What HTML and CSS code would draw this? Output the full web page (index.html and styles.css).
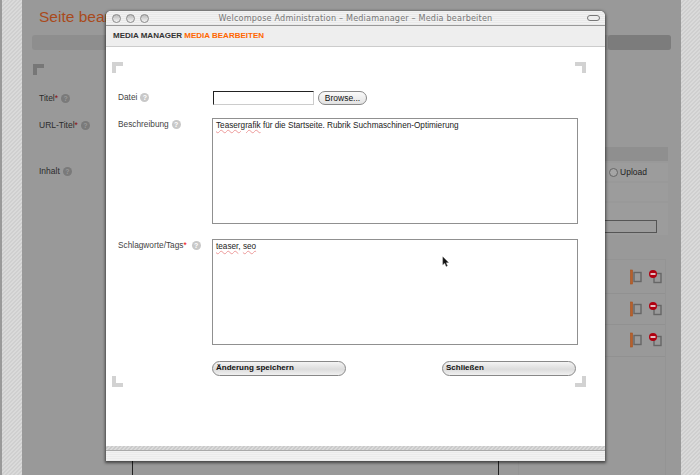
FILE: index.html
```html
<!DOCTYPE html>
<html lang="de">
<head>
<meta charset="utf-8">
<title>Welcompose Administration</title>
<link rel="stylesheet" href="styles.css">
</head>
<body>
<div class="desk">
  <div class="page">
    <h1 class="page-title">Seite bearbeiten</h1>
    <div class="page-bar"><span class="page-bar-end"></span></div>
    <div class="page-corner"></div>
    <div class="page-cols">
      <div class="page-form">
        <div class="page-label page-label-title">Titel<em>*</em><span class="help help-dark">?</span></div>
        <div class="page-label page-label-url">URL-Titel<em>*</em><span class="help help-dark">?</span></div>
        <div class="page-label page-label-body">Inhalt<span class="help help-dark">?</span></div>
        <div class="page-editor"></div>
      </div>
      <div class="page-side">
        <div class="side-band"></div>
        <div class="side-row side-row-radio"><span class="side-radio"></span>Upload</div>
        <div class="side-row"></div>
        <div class="side-row side-row-input"><span class="side-input"></span></div>
        <div class="side-list">
          <div class="side-item"><svg class="side-icons" width="32" height="16" viewBox="0 0 32 16"><rect x="0.5" y="1" width="2" height="14" fill="#b8602c" stroke="#a5531f" stroke-width=".6"/><rect x="4" y="3.5" width="7" height="9" fill="none" stroke="#666" stroke-width="1.4"/><rect x="24" y="4.5" width="7" height="9" fill="none" stroke="#666" stroke-width="1.4"/><circle cx="23" cy="5" r="4" fill="#b00010"/><rect x="20.5" y="4.2" width="5" height="1.6" fill="#eee"/></svg></div>
          <div class="side-item"><svg class="side-icons" width="32" height="16" viewBox="0 0 32 16"><rect x="0.5" y="1" width="2" height="14" fill="#b8602c" stroke="#a5531f" stroke-width=".6"/><rect x="4" y="3.5" width="7" height="9" fill="none" stroke="#666" stroke-width="1.4"/><rect x="24" y="4.5" width="7" height="9" fill="none" stroke="#666" stroke-width="1.4"/><circle cx="23" cy="5" r="4" fill="#b00010"/><rect x="20.5" y="4.2" width="5" height="1.6" fill="#eee"/></svg></div>
          <div class="side-item"><svg class="side-icons" width="32" height="16" viewBox="0 0 32 16"><rect x="0.5" y="1" width="2" height="14" fill="#b8602c" stroke="#a5531f" stroke-width=".6"/><rect x="4" y="3.5" width="7" height="9" fill="none" stroke="#666" stroke-width="1.4"/><rect x="24" y="4.5" width="7" height="9" fill="none" stroke="#666" stroke-width="1.4"/><circle cx="23" cy="5" r="4" fill="#b00010"/><rect x="20.5" y="4.2" width="5" height="1.6" fill="#eee"/></svg></div>
        </div>
      </div>
    </div>
  </div>
</div>

<div class="window">
  <div class="titlebar">
    <div class="traffic"><span class="dot"></span><span class="dot"></span><span class="dot"></span></div>
    <div class="title">Welcompose Administration – Mediamanager – Media bearbeiten</div>
    <span class="pill"></span>
  </div>
  <div class="subhead"><strong>MEDIA MANAGER</strong> <span class="accent">MEDIA BEARBEITEN</span></div>
  <div class="content">
    <span class="corner corner-tl"></span>
    <span class="corner corner-tr"></span>
    <span class="corner corner-bl"></span>
    <span class="corner corner-br"></span>
    <div class="row row-file">
      <div class="label">Datei<span class="help">?</span></div>
      <div class="file-box"></div>
      <div class="browse">Browse...</div>
    </div>
    <div class="row row-desc">
      <div class="label">Beschreibung<span class="help">?</span></div>
      <div class="area"><span class="typo">Teasergrafik</span> für die Startseite. Rubrik Suchmaschinen-Optimierung</div>
    </div>
    <div class="row row-tags">
      <div class="label">Schlagworte/Tags<em>*</em><span class="help help-wide">?</span></div>
      <div class="area"><span class="typo">teaser</span>, <span class="typo">seo</span></div>
    </div>
    <div class="actions">
      <div class="btn">Änderung speichern</div>
      <div class="btn">Schließen</div>
    </div>
  </div>
  <div class="hatch"></div>
  <div class="footer"></div>
</div>

<svg class="cursor" width="8" height="12" viewBox="0 0 10 14"><path d="M1 0.5 L1 10.5 L3.4 8.4 L5.2 12.6 L6.8 11.8 L5 7.8 L8.2 7.6 Z" fill="#111" stroke="#777" stroke-width=".5"/></svg>
</body>
</html>
```
FILE: styles.css
```css
* { box-sizing: border-box; }
html, body { margin: 0; height: 100%; overflow: hidden; }
body {
  background: #999;
  font-family: "Liberation Sans", Arial, sans-serif;
  position: relative;
}
.desk {
  margin-left: 2px;
  height: 475px;
  padding-left: 20px;
  background: repeating-linear-gradient(135deg, #dadada 0, #dadada 1.414px, #cfcfcf 1.414px, #cfcfcf 2.828px);
}
.page {
  width: 659px;
  height: 475px;
  background: #999;
  overflow: hidden;
  padding-top: 8px;
}
.page-title {
  margin: 0 0 0 17px;
  font-size: 15.5px;
  line-height: 18px;
  font-weight: normal;
  color: #a94a1c;
}
.page-bar {
  margin: 9px 10px 0;
  height: 15px;
  background: #8e8e8e;
  border-radius: 3px;
  display: flex;
  justify-content: flex-end;
}
.page-bar-end {
  width: 63px;
  background: #7c7c7c;
  border-radius: 3px;
}
.page-corner {
  margin: 14px 0 0 11px;
  width: 11px;
  height: 11px;
  border-top: 4px solid #777;
  border-left: 4px solid #777;
}
.page-cols {
  display: grid;
  grid-template-columns: 496px 150px;
}
.page-form { padding-top: 18px; }
.page-label {
  margin-left: 17px;
  font-size: 8.5px;
  line-height: 11px;
  color: #2c2c2c;
  display: flex;
  align-items: center;
}
.page-label em { color: #8c1010; font-style: normal; }
.page-label-url { margin-top: 16px; }
.page-label-body { margin-top: 35px; }
.page-editor {
  margin: 14px 0 0 110px;
  width: 367px;
  height: 320px;
  border: 1px solid #222;
}
.help {
  display: inline-block;
  width: 9px;
  height: 9px;
  margin-left: 3px;
  border-radius: 50%;
  background: #c8c8c8;
  color: #fff;
  font-size: 7px;
  line-height: 9px;
  font-weight: bold;
  text-align: center;
}
.help-dark { background: #7a7a7a; color: #999; }
.page-side { padding-top: 72px; }
.side-band { height: 14px; background: #8f8f8f; }
.side-row {
  margin-top: 2px;
  height: 18px;
  background: #9c9c9c;
  display: flex;
  align-items: center;
  justify-content: flex-end;
  padding-right: 21px;
  font-size: 8.5px;
  color: #222;
}
.side-radio {
  width: 9px;
  height: 9px;
  margin-right: 2px;
  border-radius: 50%;
  border: 1px solid #666;
  background: #a5a5a5;
}
.side-row-input {
  height: 32px;
  align-items: flex-end;
  padding: 0 11px 2px 0;
}
.side-input {
  width: 140px;
  height: 13px;
  border: 1px solid #555;
}
.side-list {
  margin-top: 24px;
  width: 148px;
  height: 240px;
  border: 1px solid #949494;
  padding-top: 2px;
}
.side-item {
  height: 31.5px;
  border-bottom: 1px solid #919191;
  display: flex;
  align-items: center;
  justify-content: flex-end;
  padding: 0 3px 0 0;
}
.side-icons { display: block; }

.window {
  position: absolute;
  left: 106px;
  top: 11px;
  width: 499px;
  height: 450px;
  background: #fff;
  border-radius: 5px 5px 0 0;
  box-shadow: 0 1px 3px 1px rgba(0,0,0,.55);
  display: flex;
  flex-direction: column;
  overflow: hidden;
}
.titlebar {
  height: 15px;
  flex: none;
  display: flex;
  align-items: center;
  padding: 0 5px 0 6px;
  background: repeating-linear-gradient(180deg, #f2f2f2 0, #f2f2f2 1px, #e9e9e9 1px, #e9e9e9 2px);
  border-bottom: 1px solid #999;
}
.traffic { display: flex; gap: 5px; flex: none; }
.dot {
  width: 9px;
  height: 9px;
  border-radius: 50%;
  border: 1px solid #8a8a8a;
  background: linear-gradient(#bbb, #f4f4f4);
}
.title {
  flex: 1;
  text-align: center;
  font-family: "DejaVu Sans", sans-serif;
  font-size: 8.1px;
  letter-spacing: .18px;
  color: #777;
  white-space: nowrap;
  padding-right: 25px;
}
.pill {
  flex: none;
  width: 13px;
  height: 6px;
  border-radius: 3px;
  border: 1px solid #777;
  background: #eee;
}
.subhead {
  height: 21px;
  flex: none;
  padding: 0 0 0 7px;
  background: #eee;
  border-bottom: 1px solid #ccc;
  font-size: 8px;
  line-height: 20px;
  font-weight: bold;
  color: #333;
  white-space: pre;
}
.subhead strong { font-weight: bold; }
.accent { color: #f60; }
.content {
  flex: 1;
  position: relative;
  padding: 44px 0 0 12px;
}
.corner {
  position: absolute;
  width: 11px;
  height: 11px;
  border: 0 solid #d2d2d2;
}
.corner-tl { left: 6px; top: 15px; border-width: 4px 0 0 4px; }
.corner-tr { left: 469px; top: 15px; border-width: 4px 4px 0 0; }
.corner-bl { left: 6px; top: 329px; border-width: 0 0 4px 4px; }
.corner-br { left: 469px; top: 329px; border-width: 0 4px 4px 0; }
.row { display: flex; align-items: flex-start; }
.label {
  width: 94px;
  flex: none;
  padding-top: 1px;
  font-size: 8.3px;
  line-height: 11px;
  color: #444;
  display: flex;
  align-items: center;
}
.label em { color: #e00; font-style: normal; }
.help-wide { margin-left: 5px; }
.row-file { height: 14px; }
.file-box {
  margin-left: 1px;
  width: 101px;
  height: 14px;
  background: #fff;
  border: 1px solid #ccc;
  border-top-color: #222;
  border-left-color: #222;
}
.browse {
  margin-left: 4px;
  width: 49px;
  height: 14px;
  border: 1px solid #888;
  border-radius: 7px;
  background: linear-gradient(#fafafa, #e2e2e2);
  font-size: 8.5px;
  line-height: 12px;
  text-align: center;
  color: #111;
}
.row-desc { margin-top: 13px; }
.row-tags { margin-top: 15px; }
.area {
  width: 366px;
  height: 106px;
  border: 1px solid #909090;
  padding: 1px 3px;
  font-size: 8.2px;
  line-height: 11px;
  color: #222;
}
.typo { text-decoration: underline wavy #ec9a9a; text-decoration-thickness: 1px; text-underline-offset: 1px; }
.actions {
  display: flex;
  gap: 96px;
  margin: 16px 0 0 94px;
}
.btn {
  width: 134px;
  height: 15px;
  padding-left: 3px;
  border: 1px solid #888;
  border-radius: 8px;
  background: linear-gradient(#f4f4f4, #dcdcdc 55%, #f0f0f0);
  font-size: 8px;
  line-height: 11px;
  font-weight: bold;
  color: #111;
}
.hatch {
  height: 5px;
  flex: none;
  background: repeating-linear-gradient(135deg, #dadada 0, #dadada 1.414px, #cacaca 1.414px, #cacaca 2.828px);
  border-bottom: 1px solid #aaa;
}
.footer {
  height: 10px;
  flex: none;
  background: repeating-linear-gradient(180deg, #f2f2f2 0, #f2f2f2 1px, #ebebeb 1px, #ebebeb 2px);
}
.cursor { position: absolute; left: 442px; top: 256px; }
```
